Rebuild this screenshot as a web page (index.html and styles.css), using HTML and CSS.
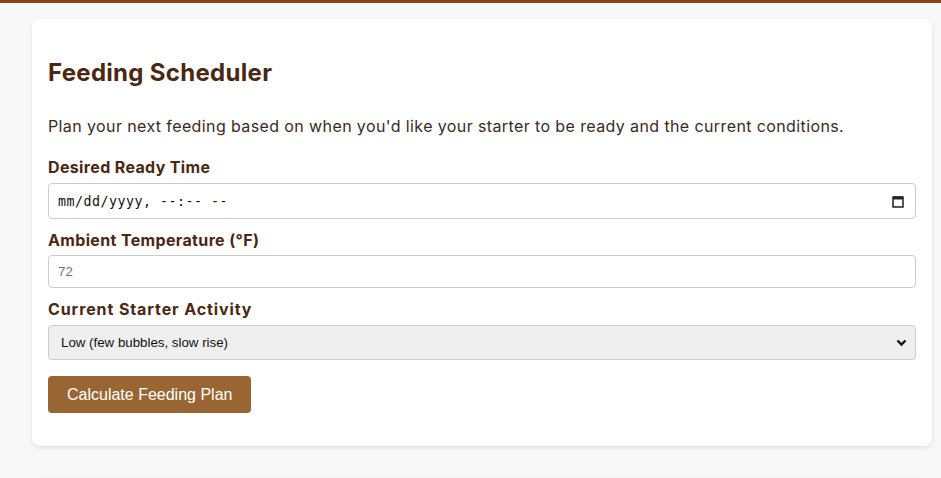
FILE: index.html
```html
<!DOCTYPE html>
<html lang="en">
<head>
<meta charset="utf-8">
<title>Feeding Scheduler</title>
<link rel="stylesheet" href="styles.css">
</head>
<body>
<main class="page">
  <section class="card">
    <h2 class="card-title">Feeding Scheduler</h2>
    <p class="intro">Plan your next feeding based on when you'd like your starter to be ready and the current conditions.</p>
    <div class="field field-date">
      <label class="field-label" for="ready">Desired Ready Time</label>
      <div class="control control-date">
        <span class="date-text">mm/dd/yyyy, --:-- --</span>
        <svg class="cal-icon" width="12" height="13" viewBox="0 0 12 13"><rect x="1" y="2" width="10" height="10" fill="none" stroke="#222" stroke-width="1.5"/><rect x="1" y="1.5" width="10" height="3" fill="#222"/></svg>
      </div>
    </div>
    <div class="field">
      <label class="field-label" for="temp">Ambient Temperature (°F)</label>
      <div class="control control-text"><span class="placeholder">72</span></div>
    </div>
    <div class="field field-select">
      <label class="field-label" for="activity">Current Starter Activity</label>
      <div class="control control-select">
        <span class="select-text">Low (few bubbles, slow rise)</span>
        <svg class="chevron" width="11" height="8" viewBox="0 0 11 8"><path d="M1.5 1.5 L5.5 5.5 L9.5 1.5" fill="none" stroke="#111" stroke-width="2.4"/></svg>
      </div>
    </div>
    <button class="btn" type="button">Calculate Feeding Plan</button>
  </section>
  <section class="card card-next"></section>
</main>
</body>
</html>
```

FILE: styles.css
```css
html, body {
  margin: 0;
  padding: 0;
}
body {
  background: #f8f8f8;
  border-top: 3px solid #8b4513;
  font-family: "Inter", "Noto Sans", sans-serif;
  color: #333;
}
.page {
  padding: 16px 9px 0 32px;
}
.card {
  background: #fff;
  border-radius: 8px;
  box-shadow: 0 2px 5px rgba(0, 0, 0, 0.09);
  padding: 16px 16px 16px 16px;
}
.card-next {
  margin-top: 32px;
  height: 60px;
}
.card-title {
  margin: 20px 0 22px;
  font-size: 24px;
  line-height: 36px;
  font-weight: 700;
  letter-spacing: 0.3px;
  color: #4a2812;
}
.intro {
  margin: 0 0 16px;
  font-size: 16px;
  line-height: 26px;
  letter-spacing: 0.39px;
  color: #3a2a1e;
}
.field {
  margin-bottom: 9px;
}
.field-label {
  display: block;
  font-size: 16px;
  line-height: 24px;
  font-weight: 700;
  letter-spacing: 0.35px;
  color: #4a2812;
  margin-bottom: 3px;
}
.field-date .field-label {
  margin-bottom: 4px;
}
.field-select .field-label {
  margin-bottom: 4px;
  letter-spacing: 0.9px;
}
.control {
  box-sizing: border-box;
  display: flex;
  align-items: center;
  border: 1px solid #cccccc;
  border-radius: 4px;
  background: #fff;
  padding: 0 9px;
}
.control-date {
  height: 36px;
  justify-content: space-between;
}
.date-text {
  font-family: "DejaVu Sans Mono", monospace;
  font-size: 13.3px;
  color: #111;
  letter-spacing: 0.5px;
}
.cal-icon {
  margin-right: 2px;
}
.control-text {
  height: 33px;
}
.placeholder {
  font-family: "Liberation Sans", Arial, sans-serif;
  font-size: 13.3px;
  color: #757575;
}
.control-select {
  height: 35px;
  background: #efefef;
  justify-content: space-between;
  padding-left: 12px;
}
.select-text {
  font-family: "Liberation Sans", Arial, sans-serif;
  font-size: 13.3px;
  color: #111;
}
.chevron {
  margin-right: -1px;
}
.btn {
  margin-top: 16px;
  display: block;
  background: #996633;
  color: #fff;
  border: none;
  border-radius: 4px;
  padding: 9px 19px;
  font-family: "Liberation Sans", Arial, sans-serif;
  font-size: 16px;
  line-height: 19px;
  margin-bottom: 17px;
}
```
